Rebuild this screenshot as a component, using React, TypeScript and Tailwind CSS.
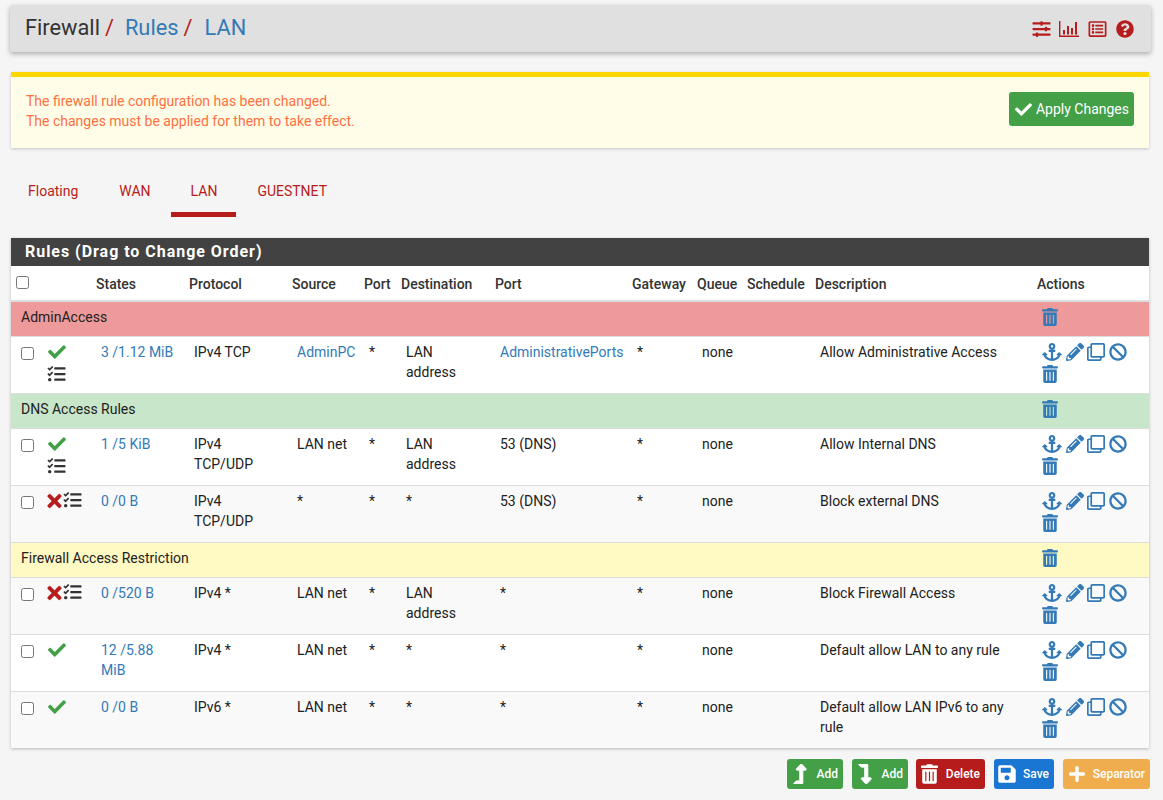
import React from "react";
import {
  FaAnchor, FaBan, FaCheck, FaLevelDownAlt, FaLevelUpAlt, FaPencilAlt, FaPlus,
  FaQuestionCircle, FaRegClone, FaRegListAlt, FaSave, FaSlidersH, FaTasks, FaTimes, FaTrashAlt,
} from "react-icons/fa";

type Rule = {
  ok: boolean; log: boolean; states: string; proto: string; source: string; sourceLink?: boolean;
  dest: string; port: string; portLink?: boolean; desc: string; bg: string;
};
type Row = { sep: string; bg: string; first?: boolean } | Rule;

const rows: Row[] = [
  { sep: "AdminAccess", bg: "bg-[#ef9a9a]", first: true },
  { ok: true, log: true, states: "3 /1.12 MiB", proto: "IPv4 TCP", source: "AdminPC", sourceLink: true, dest: "LAN address", port: "AdministrativePorts", portLink: true, desc: "Allow Administrative Access", bg: "bg-white" },
  { sep: "DNS Access Rules", bg: "bg-[#c8e6c9]" },
  { ok: true, log: true, states: "1 /5 KiB", proto: "IPv4 TCP/UDP", source: "LAN net", dest: "LAN address", port: "53 (DNS)", desc: "Allow Internal DNS", bg: "bg-white" },
  { ok: false, log: true, states: "0 /0 B", proto: "IPv4 TCP/UDP", source: "*", dest: "*", port: "53 (DNS)", desc: "Block external DNS", bg: "bg-[#f9f9f9]" },
  { sep: "Firewall Access Restriction", bg: "bg-[#fff9c4]" },
  { ok: false, log: true, states: "0 /520 B", proto: "IPv4 *", source: "LAN net", dest: "LAN address", port: "*", desc: "Block Firewall Access", bg: "bg-[#f9f9f9]" },
  { ok: true, log: false, states: "12 /5.88 MiB", proto: "IPv4 *", source: "LAN net", dest: "*", port: "*", desc: "Default allow LAN to any rule", bg: "bg-white" },
  { ok: true, log: false, states: "0 /0 B", proto: "IPv6 *", source: "LAN net", dest: "*", port: "*", desc: "Default allow LAN IPv6 to any rule", bg: "bg-[#f9f9f9]" },
];

const widths = [80, 93, 103, 72, 37, 94, 137, 65, 50, 68, 222, 117];
const heads = ["", "States", "Protocol", "Source", "Port", "Destination", "Port", "Gateway", "Queue", "Schedule", "Description", "Actions"];

const td = "border-t border-[#dddddd] px-[10px] pt-[5px] align-top leading-5 h-[57px]";
const Box = ({ className = "" }: { className?: string }) => (
  <input type="checkbox" className={`w-[13px] h-[13px] m-0 shrink-0 ${className}`} />
);

function ChartIcon() {
  return (
    <svg viewBox="0 0 20 18" className="w-[20px] h-[18px] mr-[9px]" fill="currentColor" aria-hidden="true">
      <path d="M0 1h1.4v14.6H20V17H0z" />
      <path d="M4 10h2v4.6H4zM8 6h2v8.6H8zM12 8h2v6.6h-2zM16 2h2v12.6h-2z" />
    </svg>
  );
}

function Actions() {
  return (
    <div className="flex flex-wrap w-[90px] text-[#337ab7] items-center">
      <FaAnchor className="w-[20px] h-[20px] mr-[4px]" />
      <FaPencilAlt className="w-[18px] h-[18px] mr-[3px]" />
      <FaRegClone className="w-[18px] h-[18px] mr-[4px]" />
      <FaBan className="w-[18px] h-[18px]" />
      <FaTrashAlt className="w-[16px] h-[18px] mt-[3px]" />
    </div>
  );
}

function Btn({ icon, label, color, cls }: { icon: React.ReactNode; label: string; color: string; cls: string }) {
  return (
    <button className={`${color} ${cls} h-[30px] rounded-[3px] text-white text-[12px] font-medium flex items-center justify-between pl-[6px] pr-[5px]`}>
      {icon}
      <span>{label}</span>
    </button>
  );
}

export default function App() {
  return (
    <div className="bg-[#f5f5f5] h-[800px] text-[14px] text-[#212121] font-['Roboto',sans-serif] overflow-hidden pt-[5px]">
      <div className="h-[47px] ml-[10px] mr-[12px] bg-[#e0e0e0] rounded-[3px] shadow-[0_2px_5px_rgba(0,0,0,0.3)] flex items-center justify-between pl-[15px] pr-[17px]">
        <div className="text-[21.8px] flex">
          <span className="text-[#333333]">Firewall</span>
          <span className="text-[#b71c1c] ml-[5px]">/</span>
          <span className="text-[#337ab7] ml-[11px]">Rules</span>
          <span className="text-[#b71c1c] ml-[5px]">/</span>
          <span className="text-[#337ab7] ml-[12px]">LAN</span>
        </div>
        <div className="flex items-center text-[#b71c1c]">
          <FaSlidersH className="w-[19px] h-[18px] mr-[8px]" />
          <ChartIcon />
          <FaRegListAlt className="w-[19px] h-[18px] mr-[9px]" />
          <FaQuestionCircle className="w-[18px] h-[18px]" />
        </div>
      </div>

      <div className="mt-[20px] ml-[11px] mr-[14px] h-[76px] bg-[#fffde7] border-t-[5px] border-[#ffd600] shadow-[0_1px_3px_rgba(0,0,0,0.2)] flex items-center justify-between px-[15px] text-[#ff7043] leading-5">
        <div className="pb-[4px]">
          The firewall rule configuration has been changed.<br />
          The changes must be applied for them to take effect.
        </div>
        <button className="w-[125px] h-[34px] rounded-[3px] bg-[#43a047] text-white flex items-center justify-center gap-[3px] mb-[7px]">
          <FaCheck className="w-[19px] h-[17px]" />
          Apply Changes
        </button>
      </div>

      <nav className="flex ml-[11px] mt-[24px] h-[45px] text-[#b71c1c]">
        <a className="pt-[9px] px-[17px] mr-[7px]">Floating</a>
        <a className="pt-[9px] px-[17px] mr-[6px]">WAN</a>
        <a className="pt-[9px] pl-[20px] pr-[19px] -ml-[3px] mr-[4px] border-b-[5px] border-[#b71c1c]">LAN</a>
        <a className="pt-[9px] px-[17px]">GUESTNET</a>
      </nav>

      <section className="ml-[11px] mr-[14px] mt-[21px] bg-white shadow-[0_1px_3px_rgba(0,0,0,0.25)]">
        <h2 className="h-[28px] bg-[#424242] text-white text-[16px] font-bold tracking-[0.97px] pl-[14px] leading-[28px]">Rules (Drag to Change Order)</h2>
        <table className="w-[1138px] table-fixed border-collapse">
          <colgroup>
            {widths.map((w, i) => <col key={i} style={{ width: w }} />)}
          </colgroup>
          <thead>
            <tr className="h-[35px]">
              {heads.map((h, i) => (
                <th key={i} className="px-[5px] pt-[2px] text-left font-medium text-[#333333] align-middle whitespace-nowrap">
                  {i === 0 ? <Box className="block mb-[4px]" /> : h}
                </th>
              ))}
            </tr>
          </thead>
          <tbody>
            {rows.map((r, i) =>
              "sep" in r ? (
                <tr key={i} className={r.bg}>
                  <td colSpan={11} className={`${r.first ? "border-t-2" : "border-t"} border-[#dddddd] px-[10px] h-[35px] align-top pt-[5px] leading-5`}>{r.sep}</td>
                  <td className={`${r.first ? "border-t-2" : "border-t"} border-[#dddddd] px-[10px] align-top pt-[6px] text-[#337ab7]`}><FaTrashAlt className="w-[16px] h-[18px]" /></td>
                </tr>
              ) : (
                <tr key={i} className={r.bg}>
                  <td className={td}>
                    <div className="flex flex-wrap w-[62px] items-start">
                      <Box className="mr-[13px] mt-[5px]" />
                      {r.ok
                        ? <FaCheck className="text-[#43a047] w-[20px] h-[18px] shrink-0 mt-[1px]" />
                        : <FaTimes className="text-[#b71c1c] w-[15px] h-[20px] mr-[1px] shrink-0" stroke="currentColor" strokeWidth={10} />}
                      {r.log && <FaTasks className={`text-[#333333] w-[19px] h-[18px] shrink-0 ${r.ok ? "ml-[26px] mt-[4px]" : ""}`} />}
                    </div>
                  </td>
                  <td className={`${td} text-[#337ab7]`}>{r.states}</td>
                  <td className={td}>{r.proto}</td>
                  <td className={`${td} ${r.sourceLink ? "text-[#337ab7]" : ""}`}>{r.source}</td>
                  <td className={td}>*</td>
                  <td className={td}>{r.dest}</td>
                  <td className={`${td} ${r.portLink ? "text-[#337ab7]" : ""}`}>{r.port}</td>
                  <td className={td}>*</td>
                  <td className={td}>none</td>
                  <td className={td}></td>
                  <td className={td}>{r.desc}</td>
                  <td className={td}><Actions /></td>
                </tr>
              )
            )}
          </tbody>
        </table>
      </section>

      <div className="flex justify-end gap-[9px] mt-[11px] mr-[13px]">
        <Btn icon={<FaLevelUpAlt className="w-[14px] h-[20px]" stroke="currentColor" strokeWidth={24} />} label="Add" color="bg-[#43a047]" cls="w-[56px]" />
        <Btn icon={<FaLevelDownAlt className="w-[14px] h-[20px]" stroke="currentColor" strokeWidth={24} />} label="Add" color="bg-[#43a047]" cls="w-[56px]" />
        <Btn icon={<FaTrashAlt className="w-[17px] h-[20px] -ml-[1px]" />} label="Delete" color="bg-[#b71c1c]" cls="w-[69px] -ml-[1px]" />
        <Btn icon={<FaSave className="w-[18px] h-[20px] -ml-[2px]" />} label="Save" color="bg-[#1976d2]" cls="w-[60px]" />
        <Btn icon={<FaPlus className="w-[18px] h-[18px] -ml-[1px]" />} label="Separator" color="bg-[#f0ad4e]" cls="w-[87px]" />
      </div>
    </div>
  );
}
